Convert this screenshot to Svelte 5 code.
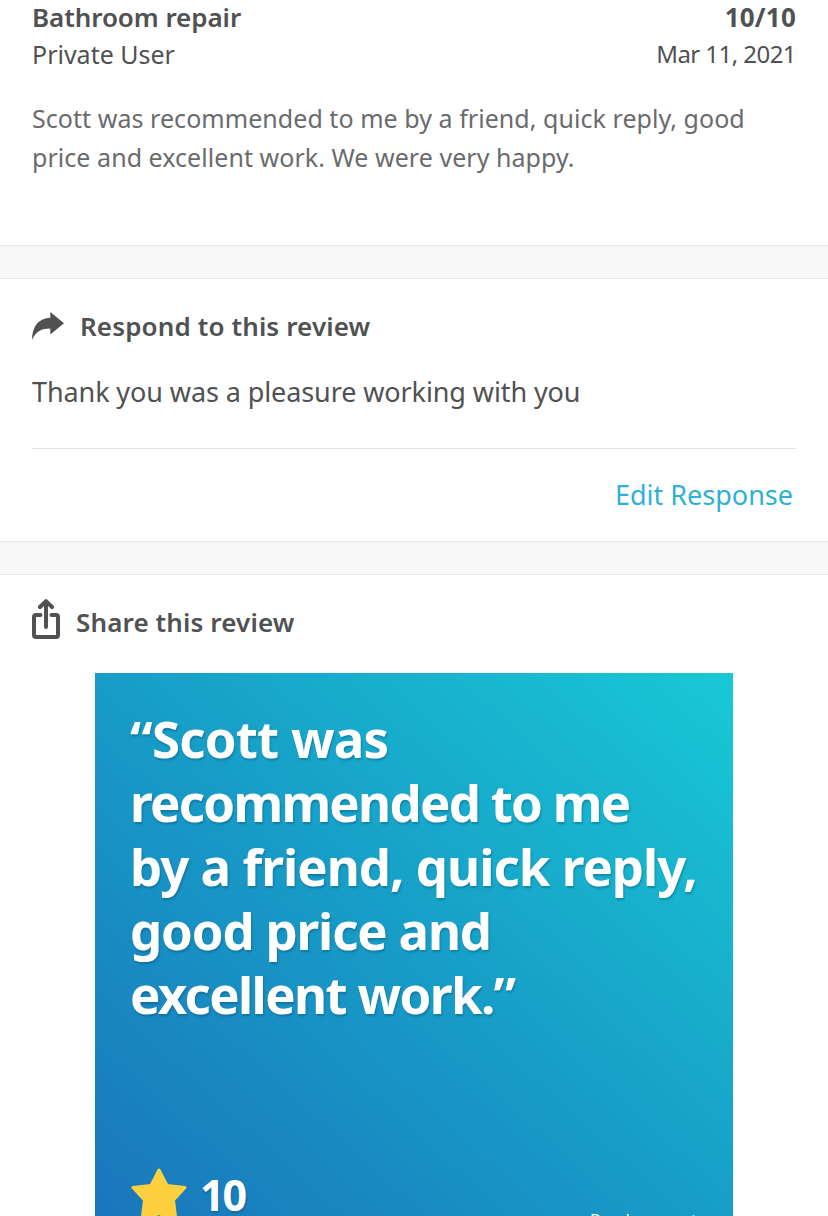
<script>
  const review = {
    title: "Bathroom repair",
    author: "Private User",
    score: 10,
    date: "Mar 11, 2021",
    text: [
      "Scott was recommended to me by a friend, quick reply, good",
      "price and excellent work. We were very happy.",
    ],
    response: "Thank you was a pleasure working with you",
  };

  const quote = [
    "“Scott was",
    "recommended to me",
    "by a friend, quick reply,",
    "good price and",
    "excellent work.”",
  ];
</script>

<main>
  <section class="review">
    <div class="row title">
      <h2>{review.title}</h2>
      <span class="score">{review.score}/10</span>
    </div>
    <div class="row meta">
      <span class="author">{review.author}</span>
      <span class="date">{review.date}</span>
    </div>
    <p class="text">
      {#each review.text as line}
        <span>{line}</span>
      {/each}
    </p>
  </section>

  <div class="divider"></div>

  <section class="respond">
    <div class="heading">
      <svg class="reply" width="32" height="28" viewBox="0 0 32 28">
        <path d="M18.300 0 32 11.200 18.300 22.600V16.500C9.500 16.500 4 19 0 28 .3 13.500 7 6.300 18.300 5.800Z" />
      </svg>
      <h3>Respond to this review</h3>
    </div>
    <p class="response">{review.response}</p>
    <div class="actions">
      <button>Edit Response</button>
    </div>
  </section>

  <div class="divider"></div>

  <section class="share">
    <div class="heading">
      <svg class="export" width="28" height="40" viewBox="0 0 28 40">
        <path d="M8.500 16H4Q2 16 2 18V36Q2 38 4 38H24Q26 38 26 36V18Q26 16 24 16H19.500M14 28V3M8 8 14 2.200 20 8" />
      </svg>
      <h3>Share this review</h3>
    </div>
    <div class="card">
      <blockquote>
        {#each quote as line}
          <span>{line}</span>
        {/each}
      </blockquote>
      <div class="footer">
        <svg class="star" width="56" height="54" viewBox="0 0 56 54">
          <path d="M28 2 36 17.500 54 19.500 42.500 32 45 53 28 45.500 11 53 13.500 32 2 19.500 20 17.500Z" />
        </svg>
        <span class="rating">{review.score}</span>
        <span class="more">Read more at</span>
      </div>
    </div>
  </section>
</main>

<style>
  :global(body) {
    margin: 0;
    background: white;
  }

  main {
    font-family: "Noto Sans", sans-serif;
    color: #505153;
    height: 1216px;
    overflow: hidden;
    display: flex;
    flex-direction: column;
  }

  section {
    box-sizing: border-box;
    padding: 0 32px;
    flex-shrink: 0;
  }

  h2,
  h3,
  p,
  blockquote {
    margin: 0;
  }

  h2,
  h3,
  .score {
    font-weight: 600;
    white-space: nowrap;
  }

  .review {
    height: 245px;
  }

  .row {
    display: flex;
    justify-content: space-between;
    line-height: 38px;
  }

  .title {
    height: 35px;
    line-height: 34px;
  }

  h2,
  .score {
    font-size: 26px;
  }

  h2 {
    letter-spacing: -0.07px;
  }

  .score {
    font-weight: 700;
    letter-spacing: 0.2px;
  }

  .meta {
    font-size: 25px;
  }

  .date {
    font-size: 24px;
    letter-spacing: -0.55px;
  }

  .text {
    margin-top: 26px;
    font-size: 25px;
    line-height: 39px;
    letter-spacing: 0.05px;
    color: #6a6b6d;
  }

  .text span,
  blockquote span {
    display: block;
    width: max-content;
  }

  .divider {
    box-sizing: border-box;
    flex-shrink: 0;
    height: 34px;
    background: #f8f8f8;
    border-top: 1px solid #e4e5e4;
    border-bottom: 1px solid #e9e9e7;
  }

  .respond {
    height: 262px;
    padding-top: 27px;
  }

  .heading {
    display: flex;
    align-items: center;
    height: 40px;
  }

  h3 {
    font-size: 26px;
    line-height: 40px;
    letter-spacing: 0.13px;
  }

  .reply {
    margin-right: 16px;
    fill: #505153;
  }

  .response {
    font-size: 27px;
    line-height: 40px;
    letter-spacing: -0.1px;
    margin-top: 26px;
    padding-bottom: 36px;
    border-bottom: 1px solid #e4e4e4;
  }

  .actions {
    display: flex;
    justify-content: flex-end;
    padding: 26px 3px 0 0;
  }

  button {
    border: 0;
    padding: 0;
    background: none;
    color: #30b0d5;
    font-family: inherit;
    font-size: 27px;
    line-height: 40px;
  }

  .share {
    padding-top: 24px;
  }

  .share h3 {
    padding-top: 5px;
  }

  .export {
    margin-right: 16px;
    fill: none;
    stroke: #505153;
    stroke-width: 4;
    stroke-linecap: round;
    stroke-linejoin: round;
  }

  .card {
    box-sizing: border-box;
    width: 638px;
    height: 638px;
    margin: 34px 0 0 63px;
    padding: 33px 36px 0;
    color: white;
    background: linear-gradient(42deg, #1b6fba 0%, #179ac6 50%, #19c8d5 100%);
    text-shadow: 1px 2px 2px rgba(0, 50, 90, 0.3);
  }

  blockquote {
    font-size: 51px;
    font-weight: 700;
    line-height: 64px;
    height: 462px;
    margin-left: -1px;
  }

  blockquote span:nth-child(1) {
    letter-spacing: -0.8px;
  }

  blockquote span:nth-child(2) {
    letter-spacing: -1.75px;
  }

  blockquote span:nth-child(3) {
    letter-spacing: -1px;
  }

  blockquote span:nth-child(4) {
    letter-spacing: -1.2px;
  }

  blockquote span:nth-child(5) {
    letter-spacing: -1.65px;
  }

  .footer {
    display: flex;
    align-items: flex-start;
  }

  .star {
    fill: #ffd03e;
    stroke: #ffd03e;
    stroke-width: 3;
    stroke-linejoin: round;
  }

  .rating {
    margin-left: 13px;
    font-size: 43px;
    font-weight: 700;
    line-height: 54px;
    letter-spacing: -2px;
  }

  .more {
    margin-left: auto;
    font-size: 17px;
    margin-top: 40px;
  }
</style>
